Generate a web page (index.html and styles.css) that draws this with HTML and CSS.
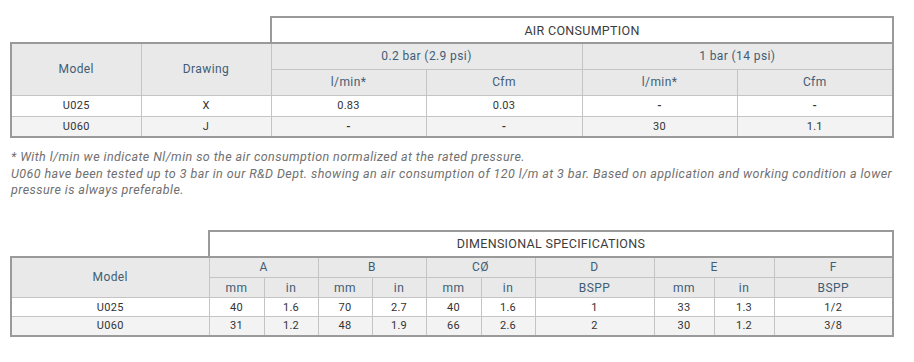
FILE: index.html
```html
<!DOCTYPE html>
<html>
<head>
<meta charset="utf-8">
<link rel="stylesheet" href="styles.css">
</head>
<body>
<div class="page">
  <table class="spec air">
    <colgroup>
      <col class="c130"><col class="c130"><col class="c155"><col class="c156"><col class="c155"><col class="c156">
    </colgroup>
    <tr class="title-row">
      <td class="blank"></td><td class="blank"></td>
      <td class="title" colspan="4">AIR CONSUMPTION</td>
    </tr>
    <tr class="head h26 top">
      <th rowspan="2" class="first">Model</th>
      <th rowspan="2">Drawing</th>
      <th colspan="2">0.2 bar (2.9 psi)</th>
      <th colspan="2" class="last">1 bar (14 psi)</th>
    </tr>
    <tr class="head h26">
      <th>l/min*</th><th>Cfm</th><th>l/min*</th><th class="last">Cfm</th>
    </tr>
    <tr class="row odd h21">
      <td class="first">U025</td><td>X</td><td>0.83</td><td>0.03</td><td><b class="dash">-</b></td><td class="last"><b class="dash">-</b></td>
    </tr>
    <tr class="row even h21 bottom">
      <td class="first">U060</td><td>J</td><td><b class="dash">-</b></td><td><b class="dash">-</b></td><td>30</td><td class="last">1.1</td>
    </tr>
  </table>

  <p class="note">* With l/min we indicate Nl/min so the air consumption normalized at the rated pressure.<br>U060 have been tested up to 3 bar in our R&amp;D Dept. showing an air consumption of 120 l/m at 3 bar. Based on application and working condition a lower pressure is always preferable.</p>

  <table class="spec dim">
    <colgroup>
      <col class="w198"><col class="w55"><col class="w54"><col class="w54"><col class="w54"><col class="w55"><col class="w54"><col class="w119"><col class="w60"><col class="w60"><col class="w119">
    </colgroup>
    <tr class="title-row">
      <td class="blank"></td>
      <td class="title" colspan="10">DIMENSIONAL SPECIFICATIONS</td>
    </tr>
    <tr class="head h21 top">
      <th rowspan="2" class="first">Model</th>
      <th colspan="2">A</th>
      <th colspan="2">B</th>
      <th colspan="2">CØ</th>
      <th>D</th>
      <th colspan="2">E</th>
      <th class="last">F</th>
    </tr>
    <tr class="head h20">
      <th>mm</th><th>in</th><th>mm</th><th>in</th><th>mm</th><th>in</th><th>BSPP</th><th>mm</th><th>in</th><th class="last">BSPP</th>
    </tr>
    <tr class="row odd h19">
      <td class="first">U025</td><td>40</td><td>1.6</td><td>70</td><td>2.7</td><td>40</td><td>1.6</td><td>1</td><td>33</td><td>1.3</td><td class="last">1/2</td>
    </tr>
    <tr class="row even h19 bottom">
      <td class="first">U060</td><td>31</td><td>1.2</td><td>48</td><td>1.9</td><td>66</td><td>2.6</td><td>2</td><td>30</td><td>1.2</td><td class="last">3/8</td>
    </tr>
  </table>
</div>
</body>
</html>
```

FILE: styles.css
```css
html, body {
  margin: 0;
  padding: 0;
  background: #ffffff;
}
.page {
  padding: 16px 0 0 10px;
  font-family: Roboto, "Liberation Sans", sans-serif;
}
.spec {
  border-collapse: collapse;
  table-layout: fixed;
  width: 883px;
  font-size: 11px;
  color: #333333;
  letter-spacing: 0.3px;
}
.spec td, .spec th {
  padding: 0;
  text-align: center;
  vertical-align: middle;
  border: 1px solid #c4c4c4;
  font-weight: normal;
}
.spec .dash {
  font-weight: bold;
}
.spec td.blank {
  border: none;
  border-bottom: 2px solid #9a9a9a;
}
.spec td.title {
  border: 2px solid #9a9a9a;
  height: 24px;
  font-size: 12.5px;
  color: #3c3c3c;
  letter-spacing: 0.3px;
  background: #ffffff;
}
.spec .head th {
  background: #e9e9e9;
  color: #3f5d75;
  font-size: 12px;
  letter-spacing: 0.4px;
}
.spec .top th { border-top: 2px solid #9a9a9a; }
.spec .first { border-left: 2px solid #9a9a9a; }
.spec .last { border-right: 2px solid #9a9a9a; }
.spec .bottom td { border-bottom: 2px solid #9a9a9a; }
.spec .odd td { background: #ffffff; }
.spec .even td { background: #f3f3f3; }
.h26 { height: 26px; }
.h21 { height: 21px; }
.h20 { height: 20px; }
.h19 { height: 19px; }
.c130 { width: 130px; }
.c155 { width: 155px; }
.c156 { width: 156px; }
.w198 { width: 198px; }
.w55 { width: 55px; }
.w54 { width: 54px; }
.w119 { width: 119px; }
.w60 { width: 60px; }
.note {
  margin: 11px 0 31px 1px;
  width: 886px;
  font-style: italic;
  font-size: 12.5px;
  line-height: 16.5px;
  color: #707070;
  letter-spacing: 0.43px;
}
```
